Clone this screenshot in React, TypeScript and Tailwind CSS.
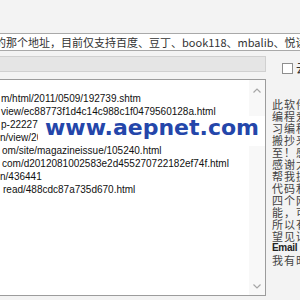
export default function App() {
  const urls: { t: string; c: string }[] = [
    { t: "m/html/2011/0509/192739.shtm", c: "ml-[1px]" },
    { t: "view/ec88773f1d4c14c988c1f0479560128a.html", c: "ml-[1px]" },
    { t: "p-222279560128.html", c: "ml-[1px]" },
    { t: "n/view/2012081002583e2d4552.html", c: "ml-0" },
    { t: "om/site/magazineissue/105240.html", c: "ml-[2px]" },
    { t: "com/d2012081002583e2d455270722182ef74f.html", c: "ml-[2px]" },
    { t: "n/436441", c: "ml-0" },
    { t: "read/488cdc87a735d670.html", c: "ml-[3px]" },
  ];
  const side = [
    "此软件是",
    "编程爱好",
    "习编程时",
    "搬抄来的",
    "至！感谢",
    "感谢大家",
    "帮我提供",
    "代码和思",
    "四个网站",
    "能，可能",
    "所以有问",
    "望见谅！",
    "Email：",
    "我有时间",
  ];
  return (
    <div className="w-[300px] h-[300px] overflow-hidden bg-[#f3f3f3] flex flex-col">
      <div className="h-[33px] shrink-0" />
      <div className="-ml-px w-[320px] h-[18px] shrink-0 border border-[#a9a9a9] bg-white overflow-hidden flex items-center">
        <span className="-ml-[5px] whitespace-nowrap text-[11px] leading-[16px] text-[#333] font-['Noto_Sans_CJK_SC',sans-serif]">
          的那个地址，目前仅支持百度、豆丁、book118、mbalib、悦读网
        </span>
      </div>
      <div className="flex items-start mt-[5px] h-[18px] shrink-0">
        <div className="-ml-px w-[267px] h-[16px] shrink-0 border border-[#d0d0d0] bg-[#e5e5e5]" />
        <div className="ml-[16px] mt-[7px] w-[11px] h-[11px] shrink-0 border border-[#8e8e8e] bg-white" />
        <span className="ml-[3px] mt-[4px] whitespace-nowrap text-[12px] leading-[16px] text-[#333] font-['Noto_Sans_CJK_SC',sans-serif]">
          云端
        </span>
      </div>
      <div className="flex mt-[5px] shrink-0">
        <div className="relative -ml-px w-[267px] h-[217px] shrink-0 border border-[#9c9c9c] bg-white flex">
          <div className="flex-1 overflow-hidden pt-[12px] font-['Liberation_Sans',Arial,sans-serif] text-[10px] leading-[13px] text-[#111]">
            {urls.map((u, i) => (
              <div key={i} className={"whitespace-nowrap " + u.c}>
                {u.t}
              </div>
            ))}
          </div>
          <div className="w-[16px] shrink-0 bg-[#f8f8f8] flex flex-col items-center justify-between pt-[8px] pb-[6px]">
            <svg width="8" height="5" viewBox="0 0 8 5">
              <polyline points="0.5,4.5 4,1 7.5,4.5" fill="none" stroke="#a6a6a6" strokeWidth="1.2" />
            </svg>
            <svg width="8" height="5" viewBox="0 0 8 5">
              <polyline points="0.5,0.5 4,4 7.5,0.5" fill="none" stroke="#a6a6a6" strokeWidth="1.2" />
            </svg>
          </div>
          <div className="absolute left-[38px] top-[36px] w-[227px] h-[30px] bg-white pl-[7px] pt-[1px]">
            <span className="whitespace-nowrap font-['DejaVu_Sans',sans-serif] font-bold text-[22px] leading-[22px] text-[#2446aa]">
              www.aepnet.com
            </span>
          </div>
        </div>
        <div className="flex-1 overflow-hidden pl-[6px] pt-[19px] text-[11px] leading-[12px] tracking-[1px] text-[#444] font-['Noto_Sans_CJK_SC',sans-serif]">
          {side.map((s, i) => (
            <div
              key={i}
              className={
                s.startsWith("Email")
                  ? "whitespace-nowrap font-['Liberation_Sans',Arial,sans-serif] font-bold text-[10px] tracking-[-0.3px] text-[#222]"
                  : "whitespace-nowrap"
              }
            >
              {s}
            </div>
          ))}
        </div>
      </div>
    </div>
  );
}
